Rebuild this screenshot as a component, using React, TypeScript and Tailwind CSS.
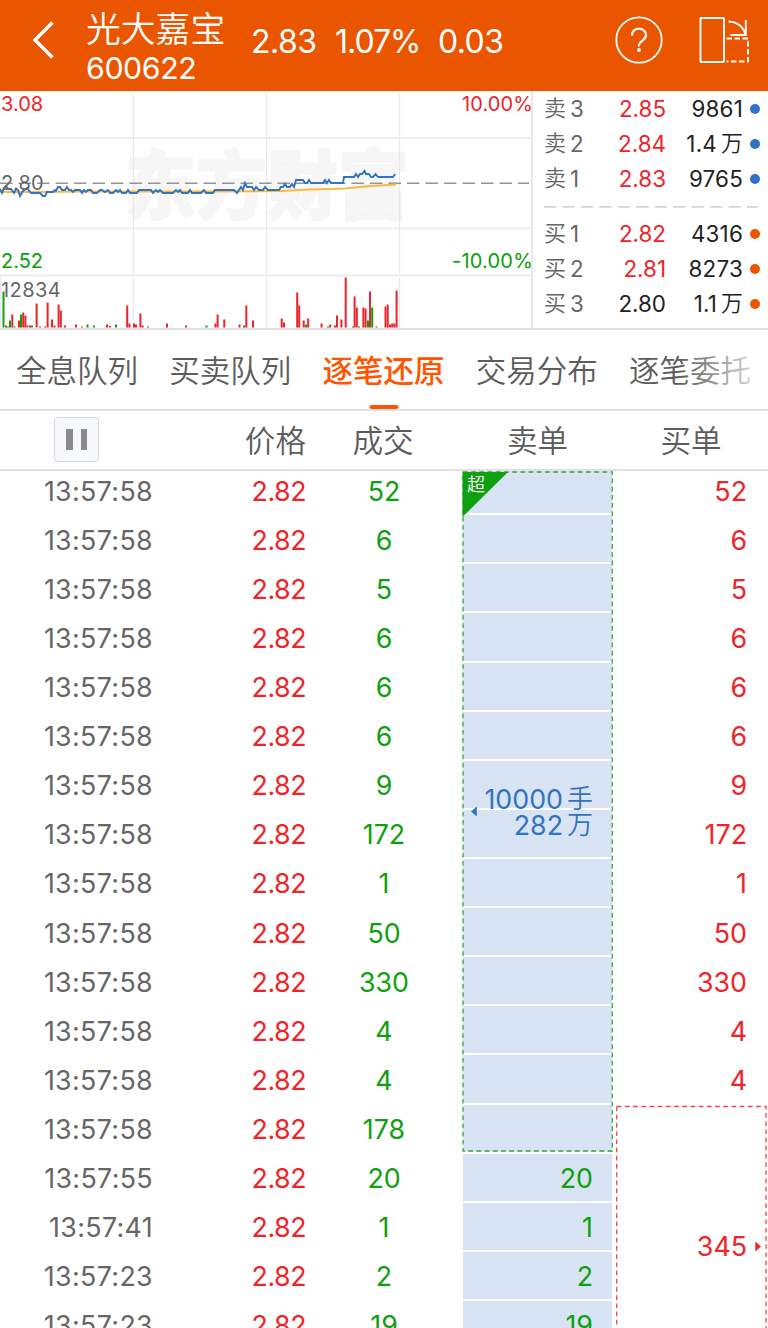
import React from "react";

const ROW = "h-[49.12px] shrink-0 flex items-center";

const trades: [string, string, string][] = [
  ["13:57:58", "52", "52"],
  ["13:57:58", "6", "6"],
  ["13:57:58", "5", "5"],
  ["13:57:58", "6", "6"],
  ["13:57:58", "6", "6"],
  ["13:57:58", "6", "6"],
  ["13:57:58", "9", "9"],
  ["13:57:58", "172", "172"],
  ["13:57:58", "1", "1"],
  ["13:57:58", "50", "50"],
  ["13:57:58", "330", "330"],
  ["13:57:58", "4", "4"],
  ["13:57:58", "4", "4"],
  ["13:57:58", "178", ""],
  ["13:57:55", "20", ""],
  ["13:57:41", "1", ""],
  ["13:57:23", "2", ""],
  ["13:57:23", "19", ""],
];

const asks = [
  ["卖", "3", "2.85", "9861", ""],
  ["卖", "2", "2.84", "1.4", "万"],
  ["卖", "1", "2.83", "9765", ""],
];
const bids = [
  ["买", "1", "2.82", "4316", ""],
  ["买", "2", "2.81", "8273", ""],
  ["买", "3", "2.80", "1.1", "万"],
];

/* x, height, colour (r = up, g = down) of each volume bar */
const volumes: [number, number, string][] = [
  [3.5, 36, "g"], [6, 2, "r"], [8, 1, "g"], [10, 7, "g"], [12.3, 13, "r"], [14.5, 1, "g"], [19, 7, "r"],
  [21, 13, "g"], [23.2, 15, "r"], [25.4, 12, "r"], [27.5, 2, "r"], [30, 2, "r"], [32, 2, "g"], [36.6, 24, "r"],
  [40, 1, "r"], [45, 1, "r"], [47.6, 25, "r"], [52, 8, "r"], [54.5, 2, "r"], [58.6, 23, "r"], [60.8, 17, "r"],
  [65, 2, "r"], [76, 3, "r"], [82, 1, "r"], [87.5, 3, "g"], [94, 2, "g"], [107, 3, "r"], [110, 1.5, "r"], [116, 3, "g"],
  [127.2, 22, "r"], [129.4, 4, "r"], [134, 4, "r"], [136, 3, "r"], [140.4, 14, "r"], [142.6, 2, "r"], [148, 1, "r"],
  [167, 4, "r"], [186, 2, "r"], [206.5, 2, "g"], [215.4, 4, "r"], [217.6, 13, "r"], [224.3, 8, "r"], [239.5, 3, "r"],
  [244, 2, "g"], [246.3, 22, "r"], [253, 7, "r"], [281.7, 9, "r"], [284, 5, "r"], [297.2, 35, "r"], [299.2, 22, "r"],
  [303.7, 7, "r"], [306, 3, "g"], [308.2, 9, "r"], [321.5, 4, "r"], [328, 1, "g"], [330.2, 3, "r"], [335, 2, "r"],
  [337, 12, "r"], [341.4, 8, "r"], [345.7, 50, "r"], [353, 1, "r"], [354.6, 31, "r"], [356.8, 20, "r"], [359, 1, "g"],
  [363.4, 20, "r"], [365.6, 19, "r"], [368, 7, "g"], [370, 36, "r"], [372.2, 20, "g"], [376.5, 1, "r"],
  [385.5, 21, "r"], [387.7, 23, "r"], [390, 3, "r"], [392.2, 4, "r"], [394.4, 4, "r"], [396.6, 37, "r"],
];

const pricePath =
  "M0 189L2 193L4 188L6 186L8 189L11 189L14 193L16 189L18 190L20 196L23 191L27 188L31 193L40 193L43 196L45 196L47 192L53 192L55 190L56 191L58 187H60L62 190L65 190L67 187L69 190L71 190L73 192L75 190L80 190L82 193L84 190L86 192L88 190H91L93 193H97L100 190H102L105 192L108 190L110 193L113 193L116 190L118 192L120 190L122 193L126 193L128 190L130 193L137 193L139 190L151 190L153 193L156 190L158 192L160 190L163 193H173L176 190L178 192L180 190L182 193H188L190 190L192 193H201L204 190L206 193H213L215 190H234L237 193L241 187L243 190L245 183L247 187L252 187L254 190L256 187L259 190H263L265 187L268 190H279L281 187L283 187L285 184L287 187H290L292 184L294 187L296 180H303L305 183H307L309 180L311 183H323L325 180L327 183L329 180L331 183H343L344 177H354L356 174L358 177L360 174H362L364.500 171L366 174H369L371 177H373L375.500 174L378 177H393L395 174";

function PriceChart() {
  return (
    <div className="relative w-[533px] h-[237px] border-r-2 border-[#e8e8ed] overflow-hidden shrink-0">
      <svg viewBox="0 91 532 237" className="block w-[532px] h-[237px]">
        <text
          x="125" y="213" fontSize="75" fontWeight="900" fill="#f6f6f7" stroke="#f6f6f7" strokeWidth="2"
          textLength="284" lengthAdjust="spacingAndGlyphs"
          fontFamily="'Noto Sans CJK SC', sans-serif"
        >
          东方财富
        </text>
        <g stroke="#e8e8ed" strokeWidth="1.3">
          <path d="M0 138H532M0 228.300H532M0 275.500H532M133.400 93V273.500M266.500 93V273.500M399.500 93V273.500M133.400 277V328M266.500 277V328M399.500 277V328M0.500 277V328" />
        </g>
        <path d="M0 183.300H529" stroke="#949494" strokeWidth="1.400" strokeDasharray="12.500 6" />
        <path d="M0 192L40 192L80 191.500H200L280 191L310 189.500L345 188.500L365 186.500L380 185.500L396 184.500" fill="none" stroke="#fbb83d" strokeWidth="2" />
        <path d={pricePath} fill="none" stroke="#3373bf" strokeWidth="1.900" />
        {volumes.map(([x, h, c], i) => (
          <rect key={i} x={x - 1} y={327.5 - h} width="2" height={h} fill={c === "r" ? "#ee2428" : "#0fa00f"} />
        ))}
      </svg>
      <span className="absolute left-[1px] top-[1px] text-[20px] leading-6 text-[#ee2428]">3.08</span>
      <span className="absolute right-[-2px] top-[1px] text-[20px] leading-6 tracking-[0.1px] text-[#ee2428]">10.00%</span>
      <span className="absolute left-[1px] top-[80px] text-[20px] leading-6 text-[#666]">2.80</span>
      <span className="absolute left-[1px] top-[158px] text-[20px] leading-6 text-[#0a9e0a]">2.52</span>
      <span className="absolute right-[-2px] top-[158px] text-[20px] leading-6 tracking-[0.2px] text-[#0a9e0a]">-10.00%</span>
      <span className="absolute left-[1px] top-[187px] text-[20px] leading-6 tracking-[0.4px] text-[#666]">12834</span>
    </div>
  );
}

function Quote({ row, dot }: { row: string[]; dot: string }) {
  const [side, level, price, size, unit] = row;
  return (
    <div className="flex h-[35px] items-center pt-px text-[22.4px]">
      <span className="w-[60px] text-[#666] flex items-center gap-[4px]">
        <span className="text-[22px] font-[350]">{side}</span>
        <span>{level}</span>
      </span>
      <span className={`w-[62px] text-right ${price === "2.80" ? "text-[#222]" : "text-[#ee2428]"}`}>{price}</span>
      <span className="w-[77px] text-[#222] flex justify-end items-center gap-[4px] tracking-[0.2px]">
        <span>{size}</span>
        {unit && <span className="text-[22px] font-[350] tracking-normal">{unit}</span>}
      </span>
      <span className={`ml-[7px] mb-px size-[10px] rounded-full ${dot}`} />
    </div>
  );
}

export default function App() {
  return (
    <div className="w-[768px] h-[1328px] overflow-hidden bg-white flex flex-col font-[Inter,'Noto_Sans_CJK_SC',sans-serif] whitespace-nowrap">
      <header className="h-[91px] shrink-0 bg-[#ea5500] text-white flex items-center">
        <svg viewBox="0 0 24 40" className="w-[24px] h-[40px] ml-[31px] mb-[11px]" fill="none" stroke="white" strokeWidth="3.500">
          <path d="M21.500 2.500L4 20L21.500 37.500" />
        </svg>
        <div className="ml-[31px] pt-[3px] w-[165px] flex flex-col">
          <span className="text-[34.800px] leading-[42px] font-[350]">光大嘉宝</span>
          <span className="text-[30.300px] leading-[36px] tracking-[-0.4px]">600622</span>
        </div>
        <div className="flex text-[32px] leading-[40px] mb-[8px] w-[364px]">
          <span className="w-[84px] tracking-[-0.500px]">2.83</span>
          <span className="w-[103px] tracking-[-1px]">1.07%</span>
          <span className="tracking-[-0.600px]">0.03</span>
        </div>
        <svg viewBox="0 0 48 48" className="w-[48px] h-[48px] mb-[11px]" fill="none" stroke="white" strokeWidth="1.800">
          <circle cx="24" cy="24" r="22.700" />
          <path d="M17 19.500C17 15 20 12.700 24 12.700S31 15.400 31 19.200C31 24.500 24 24.500 24 29.500V30.500" strokeWidth="2.200" />
          <circle cx="24" cy="34" r="1.900" fill="white" stroke="none" />
        </svg>
        <svg viewBox="0 0 50 48" className="w-[50px] h-[48px] ml-[36px] mb-[11px]" fill="none" stroke="white" strokeWidth="1.900">
          <rect x="1.500" y="2" width="23.500" height="44" rx="1" />
          <path d="M29.500 5.500C38.500 6 44.500 11 46.500 19M46.800 4V19H31.500" />
          <path d="M27.500 22.500H49V45.500H27.500" strokeDasharray="5.500 2.500" />
        </svg>
      </header>

      <section className="flex h-[237px] shrink-0">
        <PriceChart />
        <div className="flex flex-col pl-[11px]">
          {asks.map((r) => <Quote key={r[1]} row={r} dot="bg-[#2f73c5]" />)}
          <svg viewBox="0 0 214 20" className="w-[214px] h-[20px]">
            <path d="M0 10.800H214" stroke="#d3d3dc" strokeWidth="1.800" strokeDasharray="12.300 6.150" />
          </svg>
          {bids.map((r) => <Quote key={r[1]} row={r} dot="bg-[#ea5500]" />)}
        </div>
      </section>

      <nav className="relative h-[82.500px] shrink-0 border-t-2 border-b-2 border-[#e0e0e6] flex items-center justify-between pl-[16px] pr-[17px] text-[30.500px] text-[#5c5c5c] font-[350]">
        <span className="pt-[4px]">全息队列</span>
        <span className="pt-[4px]">买卖队列</span>
        <span className="relative h-full flex items-center pt-[4px] font-medium text-[#ff5500]">
          逐笔还原
          <span className="absolute left-1/2 -translate-x-1/2 bottom-0 w-[29px] h-[4px] rounded-full bg-[#ff5500]" />
        </span>
        <span className="pt-[4px]">交易分布</span>
        <span className="pt-[4px]">逐笔委托</span>
        <span className="absolute right-0 top-2 h-[64px] w-[90px] bg-linear-to-r from-white/0 to-white/90" />
      </nav>

      <div className="h-[60.500px] shrink-0 border-b-2 border-[#e0e0e6] flex items-center text-[30.600px] text-[#5c5c5c] font-[350]">
        <div className="w-[99px] flex justify-end">
          <div className="size-[45px] rounded-[4px] border border-[#d6d6e0] bg-[#f7f8fa] flex items-center justify-center gap-[8px]">
            <span className="w-[6.500px] h-[21px] bg-[#8a8a8f]" />
            <span className="w-[6.500px] h-[21px] bg-[#8a8a8f]" />
          </div>
        </div>
        <span className="w-[207px] text-right pt-[2px]">价格</span>
        <span className="w-[154px] text-center pt-[2px]">成交</span>
        <span className="w-[155px] text-center pt-[2px]">卖单</span>
        <span className="w-[152px] text-center pt-[2px]">买单</span>
      </div>

      <main className="flex flex-1 min-h-0 overflow-hidden text-[26.800px]">
        <div className="w-[153px] -mt-[4.900px] text-[#666] tracking-[0.35px]">
          {trades.map((t, i) => <div key={i} className={`${ROW} justify-end`}>{t[0]}</div>)}
        </div>
        <div className="w-[153px] -mt-[4.900px] text-[#ee2428] tracking-[-0.500px]">
          {trades.map((_, i) => <div key={i} className={`${ROW} justify-end`}>2.82</div>)}
        </div>
        <div className="w-[156px] -mt-[4.900px] text-[#0fa00f]">
          {trades.map((t, i) => <div key={i} className={`${ROW} justify-center`}>{t[1]}</div>)}
        </div>
        <div className="w-[151px] -mt-[4.900px] text-[#0fa00f]">
          <div className="relative">
            {trades.slice(0, 14).map((_, i) => (
              <div key={i} className={`${ROW} mx-px bg-[#d8e3f3] border-b-[2.500px] border-white`} />
            ))}
            <svg viewBox="0 0 151 688" className="absolute left-0 top-0 w-[151px] h-[688px]" fill="none">
              <path d="M0.500 6H46L0.500 51Z" fill="#0fa00f" />
              <rect x="1" y="6" width="149.300" height="679" stroke="#0fa00f" strokeOpacity="0.85" strokeWidth="1.300" strokeDasharray="4.700 3.500" />
              <path d="M9 345.500L14.800 340.500V350.500Z" fill="#2f73c5" />
            </svg>
            <span className="absolute left-[5px] top-[5.500px] text-[18px] leading-[26px] font-[350] text-white">超</span>
            <div className="absolute right-[20px] top-[319.700px] text-[#3373bf] flex flex-col items-end leading-[26px]">
              <div className="h-[26px] flex items-center gap-[4px]">10000<span className="font-[350] text-[26px]">手</span></div>
              <div className="h-[26px] flex items-center gap-[4px]">282<span className="font-[350] text-[26px]">万</span></div>
            </div>
          </div>
          {trades.slice(14).map((t, i) => (
            <div key={i} className={`${ROW} mx-px justify-end bg-[#d8e3f3] border-b-[2.500px] border-white pt-[2px] pr-[19px]`}>{t[1]}</div>
          ))}
        </div>
        <div className="w-[155px] -mt-[4.900px] text-[#ee2428]">
          {trades.slice(0, 13).map((t, i) => <div key={i} className={`${ROW} justify-end pr-[21px]`}>{t[2]}</div>)}
          <div className="relative h-[283px] flex items-center justify-end pr-[21px]">
            <svg viewBox="0 0 155 283" className="absolute inset-0 w-[155px] h-[283px]" fill="none">
              <rect x="3.700" y="1.500" width="149.300" height="300" stroke="#ee2428" strokeOpacity="0.85" strokeWidth="1.300" strokeDasharray="4.700 3.500" />
              <path d="M148 141.500L142.300 136.500V146.500Z" fill="#ee2428" />
            </svg>
            <span>345</span>
          </div>
        </div>
      </main>
    </div>
  );
}
